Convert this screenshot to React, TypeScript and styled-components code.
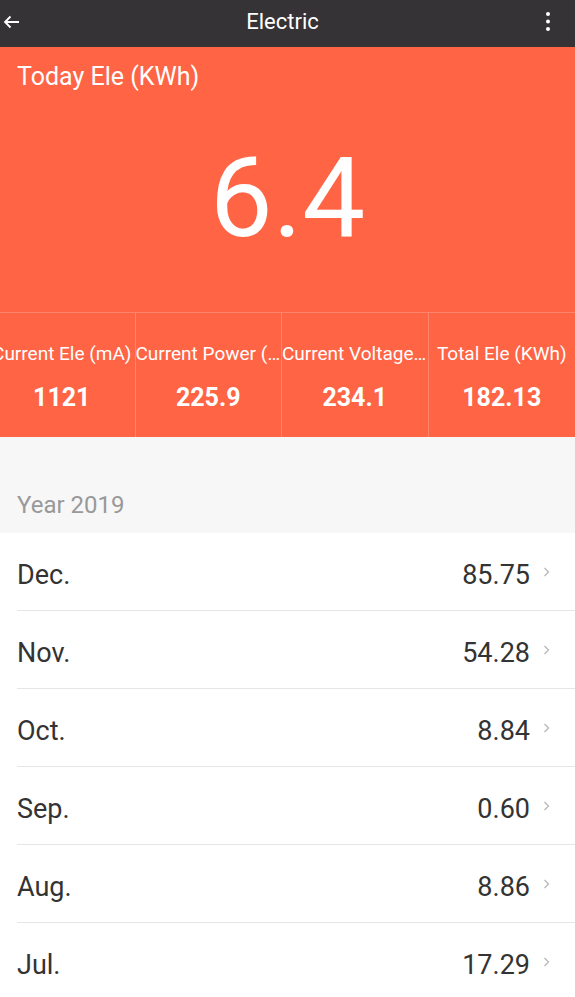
import {FC} from 'react';
import styled, {createGlobalStyle} from 'styled-components';

const Colors = {
    bar: '#363336',
    orange: '#ff6445',
    text: '#333333',
    gray: '#999999',
    bcg: '#f7f7f7',
    line: '#e6e6e6',
};

const Global = createGlobalStyle`
    body{
        margin:0;
        background:#ffffff;
        font-family: Roboto, "Liberation Sans", sans-serif;
    }
`;

const Page = styled.div`
    width:575px;
    display:flex;
    flex-direction:column;
`;

//top bar
const TopBar = styled.div`
    height:47px;
    box-sizing:border-box;
    padding:0 17px 4px 1px;
    background-color:${Colors.bar};
    display:flex;
    align-items:center;
    justify-content:space-between;
    color:#ffffff;
`;

const Title = styled.div`
    font-size:22px;
    margin-left:6px;
`;

const IconBox = styled.div`
    width:20px;
    height:43px;
    display:flex;
    align-items:center;
    justify-content:center;
`;

//orange part
const Hero = styled.div`
    background-color:${Colors.orange};
    color:#ffffff;
    display:flex;
    flex-direction:column;
`;

const HeroLabel = styled.div`
    font-size:25px;
    line-height:28px;
    padding:16px 17px 0;
`;

const BigNumber = styled.div`
    font-size:112px;
    font-weight:400;
    line-height:112px;
    text-align:center;
    margin-top:51px;
    height:170px;
`;

const Stats = styled.div`
    border-top:1px solid rgba(255,255,255,0.22);
    height:124px;
    overflow:hidden;
`;

const StatsRow = styled.div`
    display:flex;
    width:586px;
    margin-left:-11px;
    height:100%;
`;

const Stat = styled.div<{$last?: boolean}>`
    width:146.5px;
    flex-shrink:0;
    border-right:${p => p.$last ? 'none' : '1px solid rgba(255,255,255,0.22)'};
    display:flex;
    flex-direction:column;
    align-items:center;
    padding-top:30px;
    box-sizing:border-box;
`;

const StatLabel = styled.div`
    font-size:19px;
    line-height:22px;
    width:100%;
    text-align:center;
    white-space:nowrap;
    overflow:hidden;
    text-overflow:ellipsis;
`;

const StatValue = styled.div`
    font-size:25px;
    font-weight:700;
    line-height:30px;
    margin-top:18px;
`;

//list
const YearHead = styled.div`
    background-color:${Colors.bcg};
    height:96px;
    box-sizing:border-box;
    padding:55px 17px 0;
    font-size:24px;
    line-height:26px;
    color:${Colors.gray};
`;

const Row = styled.div`
    height:78px;
    margin-left:17px;
    padding:6px 25px 0 0;
    box-sizing:border-box;
    border-bottom:1px solid ${Colors.line};
    display:flex;
    align-items:center;
    color:${Colors.text};
    font-size:27px;
    line-height:32px;
`;

const Month = styled.div`
    flex:1;
`;

const Value = styled.div`
    margin-right:13px;
`;

const Chevron: FC = () => (
    <svg width="7" height="10" viewBox="0 0 7 10" style={{marginTop: '-6px'}}>
        <polyline points="1.5,1 5.5,5 1.5,9" fill="none" stroke="#b8b8b8" strokeWidth="1.3"/>
    </svg>
);

const stats = [
    {label: 'Current Ele (mA)', value: '1121'},
    {label: 'Current Power (W)', value: '225.9'},
    {label: 'Current Voltage (V)', value: '234.1'},
    {label: 'Total Ele (KWh)', value: '182.13'},
];

const months = [
    {m: 'Dec.', v: '85.75'},
    {m: 'Nov.', v: '54.28'},
    {m: 'Oct.', v: '8.84'},
    {m: 'Sep.', v: '0.60'},
    {m: 'Aug.', v: '8.86'},
    {m: 'Jul.', v: '17.29'},
];

const App: FC = () => {
    return (
        <Page>
            <Global/>
            <TopBar>
                <IconBox>
                    <svg width="17" height="14" viewBox="0 0 17 14">
                        <path d="M16 7H2M7.5 1.5L2 7l5.5 5.5" fill="none" stroke="#ffffff" strokeWidth="1.8"/>
                    </svg>
                </IconBox>
                <Title>Electric</Title>
                <IconBox>
                    <svg width="6" height="22" viewBox="0 0 6 22">
                        <circle cx="3" cy="3" r="2" fill="#ffffff"/>
                        <circle cx="3" cy="10.5" r="2" fill="#ffffff"/>
                        <circle cx="3" cy="18" r="2" fill="#ffffff"/>
                    </svg>
                </IconBox>
            </TopBar>

            <Hero>
                <HeroLabel>Today Ele (KWh)</HeroLabel>
                <BigNumber>6.4</BigNumber>
                <Stats>
                    <StatsRow>
                        {stats.map((s, i) => (
                            <Stat key={s.label} $last={i === stats.length - 1}>
                                <StatLabel>{s.label}</StatLabel>
                                <StatValue>{s.value}</StatValue>
                            </Stat>
                        ))}
                    </StatsRow>
                </Stats>
            </Hero>

            <YearHead>Year 2019</YearHead>
            {months.map(r => (
                <Row key={r.m}>
                    <Month>{r.m}</Month>
                    <Value>{r.v}</Value>
                    <Chevron/>
                </Row>
            ))}
        </Page>
    );
};
export default App;
